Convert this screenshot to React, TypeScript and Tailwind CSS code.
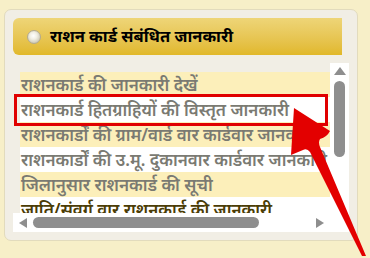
const rows = [
  { text: 'राशनकार्ड की जानकारी देखें', bg: 'bg-[#fcefba]' },
  { text: 'राशनकार्ड हितग्राहियों की विस्तृत जानकारी', bg: 'bg-white' },
  { text: 'राशनकार्डों की ग्राम/वार्ड वार कार्डवार जानकारी', bg: 'bg-[#fcefba]' },
  { text: 'राशनकार्डों की उ.मू. दुकानवार कार्डवार जानकारी', bg: 'bg-white' },
  { text: 'जिलानुसार राशनकार्ड की सूची', bg: 'bg-[#fcefba]' },
  { text: 'जाति/संवर्ग वार राशनकार्ड की जानकारी', bg: 'bg-white', dark: true },
];

export default function App() {
  return (
    <div
      className="relative h-[258px] w-[370px] overflow-hidden bg-[#f7efc8] pl-[4px] pt-[9px]"
      style={{ fontFamily: '"Noto Sans", "Noto Sans Devanagari", sans-serif' }}
    >
      <div className="h-[232px] w-[354px] rounded-[7px] border border-[#e2dbbd] bg-[#f1eee5] pl-[8px] pt-[8px]">
        <div className="flex h-[37px] w-[329px] items-center gap-[9px] rounded-l-[6px] bg-gradient-to-b from-[#eed577] to-[#e1b828] pl-[14px]">
          <div className="h-[14px] w-[14px] rounded-full border border-[#b3ab91] bg-[radial-gradient(circle_at_45%_40%,#ffffff_0%,#f1efe3_35%,#b9b39c_100%)]" />
          <span className="text-[16.5px] font-bold leading-none text-black">राशन कार्ड संबंधित जानकारी</span>
        </div>

        <div className="mt-[8px] flex h-[169px] w-[336px]">
          <div className="flex w-[317px] flex-col">
            <div className="h-[150px] overflow-hidden pl-[7px] pt-[9px]">
              {rows.map((r) => (
                <div
                  key={r.text}
                  className={`flex h-[25px] items-center whitespace-nowrap pl-[1px] text-[17px] font-semibold ${r.bg} ${
                    r.dark ? 'text-[#4b3c05]' : 'text-[#7a7a72]'
                  }`}
                >
                  {r.text}
                </div>
              ))}
            </div>
            <div className="flex h-[19px] items-center bg-white pl-[6px] pr-[6px]">
              <svg width="8" height="10" viewBox="0 0 8 10">
                <path d="M8 0 L0 5 L8 10 Z" fill="#8e8e8e" />
              </svg>
              <div className="ml-[6px] h-[11px] w-[226px] rounded-full bg-[#8e8e8e]" />
              <div className="flex-1" />
              <svg width="8" height="10" viewBox="0 0 8 10">
                <path d="M0 0 L8 5 L0 10 Z" fill="#8e8e8e" />
              </svg>
            </div>
          </div>
          <div className="flex w-[19px] flex-col items-center bg-white pt-[4px]">
            <svg width="12" height="8" viewBox="0 0 12 8">
              <path d="M0 8 L6 0 L12 8 Z" fill="#8e8e8e" />
            </svg>
            <div className="mt-[6px] h-[76px] w-[11px] rounded-full bg-[#8e8e8e]" />
          </div>
        </div>
      </div>

      <div className="absolute left-[14px] top-[94px] h-[32px] w-[314px] border-[3px] border-[#e00000]" />

      <svg className="absolute left-0 top-0" width="370" height="258" viewBox="0 0 370 258">
        <path
          d="M294 108 L330 131 Q327 137 320 139 Q318 142 320 147 L366 256 L362 256 L310 152 Q307 148 303 150 L291 155 Z"
          fill="#e30000"
        />
      </svg>
    </div>
  );
}
